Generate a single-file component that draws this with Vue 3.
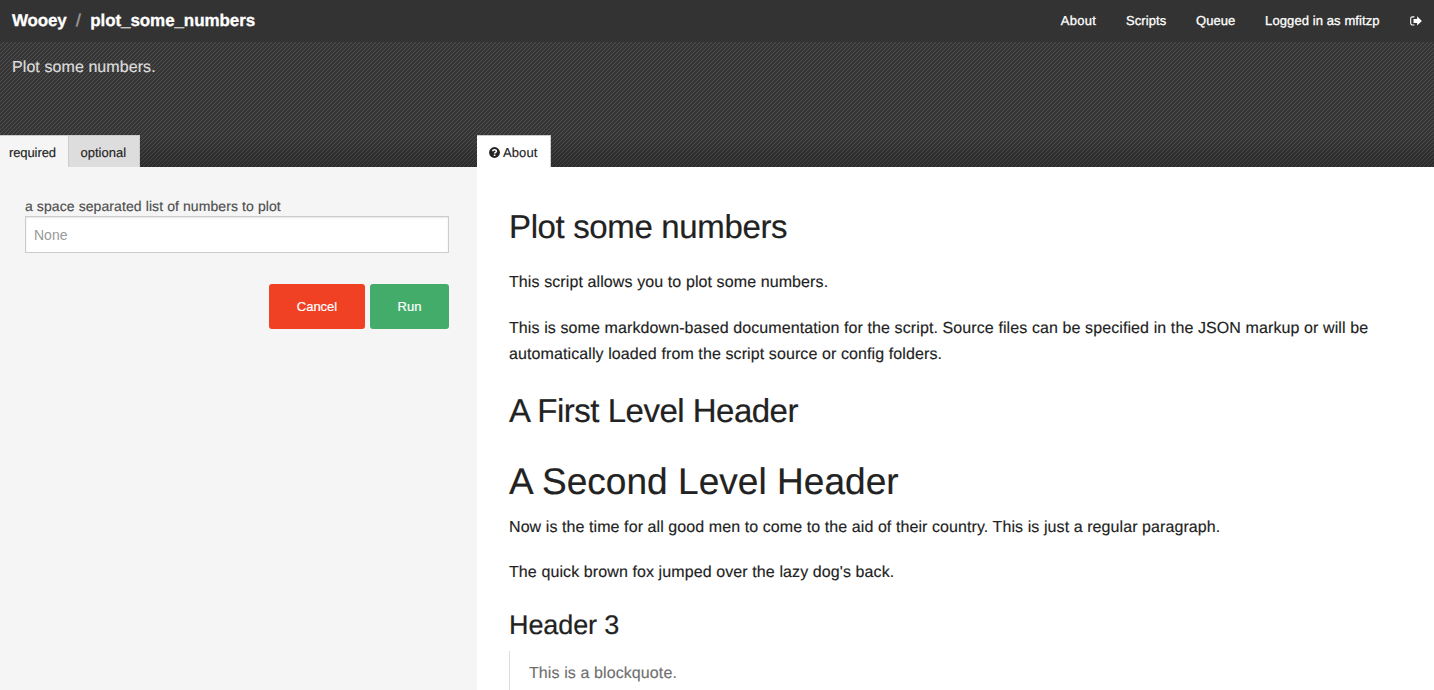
<script setup>
const links = ['About', 'Scripts', 'Queue', 'Logged in as mfitzp']
</script>

<template>
  <div class="page">
    <nav class="topbar">
      <div class="crumbs"><b class="brand">Wooey</b><span class="slash">/</span><b class="script">plot_some_numbers</b></div>
      <div class="links">
        <a v-for="l in links" :key="l">{{ l }}</a>
        <svg class="signout" width="12" height="10" viewBox="0 0 12 10"><path d="M4.4.9H2.4Q.7.9.7 2.6v4.7Q.7 9 2.4 9h2" fill="none" stroke="#fff" stroke-width="1.1" /><path d="M11.9 4.95 7.1.3v2.6H3.5v4.1h3.6v2.6z" fill="#fff" /></svg>
      </div>
    </nav>
    <header class="banner">
      <p class="desc">Plot some numbers.</p>
      <div class="tabs">
        <div class="left">
          <a class="tab required">required</a><a class="tab optional">optional</a>
        </div>
        <a class="tab about">
          <svg width="11" height="11" viewBox="0 0 11 11"><circle cx="5.5" cy="5.5" r="5.4" fill="#222" /><path d="M3.6 4.3C3.7 2.2 7.4 2.2 7.4 4.2 7.4 5.4 5.7 5.3 5.6 6.6" fill="none" stroke="#fff" stroke-width="1.5" /><path d="M4.8 7.5h1.6v1.5H4.8z" fill="#fff" /></svg>
          <span>About</span>
        </a>
      </div>
    </header>
    <main class="body">
      <section class="form">
        <label>a space separated list of numbers to plot</label>
        <input type="text" placeholder="None">
        <div class="actions">
          <button class="cancel">Cancel</button>
          <button class="run">Run</button>
        </div>
      </section>
      <article class="doc">
        <h2 class="t1">Plot some numbers</h2>
        <p class="p1">This script allows you to plot some numbers.</p>
        <p class="p2">This is some markdown-based documentation for the script. Source files can be specified in the JSON markup or will be<br>automatically loaded from the script source or config folders.</p>
        <h2 class="t2">A First Level Header</h2>
        <h1 class="t3">A Second Level Header</h1>
        <p class="p3">Now is the time for all good men to come to the aid of their country. This is just a regular paragraph.</p>
        <p class="p4">The quick brown fox jumped over the lazy dog's back.</p>
        <h3 class="t4">Header 3</h3>
        <blockquote>This is a blockquote.</blockquote>
      </article>
    </main>
  </div>
</template>

<style scoped>
* { box-sizing: border-box; }
.page { width: 1434px; height: 690px; overflow: hidden; font-family: "Liberation Sans", Arial, sans-serif; color: #222; background: #fff; display: flex; flex-direction: column; text-rendering: geometricPrecision; }
p, h1, h2, h3, blockquote { margin: 0; font-weight: 400; white-space: nowrap; }
.topbar { height: 42px; flex: none; background: #333; color: #fff; display: flex; justify-content: space-between; padding: 0 12px; line-height: 41px; }
.crumbs { font-size: 17px; display: flex; -webkit-text-stroke: .3px; }
.brand { letter-spacing: -.2px; width: 55px; }
.script { letter-spacing: -.09px; }
.slash { color: #999; width: 23.3px; padding-left: 9px; -webkit-text-stroke: .5px; }
.links { display: flex; align-items: flex-start; font-size: 13px; letter-spacing: .1px; -webkit-text-stroke: .3px #fff; }
.links a { margin-right: 29.6px; line-height: 41px; }
.links a:nth-child(1) { letter-spacing: .3px; }
.links a:nth-child(4) { margin-right: 30.3px; }
.signout { margin-top: 15.5px; }
.banner { height: 125px; flex: none; display: flex; flex-direction: column; justify-content: space-between; background: linear-gradient(#0000 75%, #0003), linear-gradient(135deg, #353535 42%, #505050 42% 58%, #353535 58%) 0 0 / 4px 4px; }
.desc { color: #ddd; font-size: 16px; line-height: 20px; padding: 16px 12px 0; letter-spacing: .08px; -webkit-text-stroke: .2px; }
.tabs { display: flex; height: 32px; }
.left { width: 477px; display: flex; }
.tab { height: 32px; font-size: 13px; padding-top: 2px; line-height: 31px; border-top: 1px solid #ccc; display: flex; align-items: center; -webkit-text-stroke: .15px; }
.required { width: 68px; padding-left: 9px; background: #f5f5f5; letter-spacing: -.1px; }
.optional { width: 72px; padding-left: 11.5px; background: #ddd; border-left: 1px solid #ccc; border-right: 1px solid #ccc; }
.about { width: 74px; padding-left: 12px; background: #fff; gap: 3px; border-right: 1px solid #ccc; letter-spacing: .1px; }
.body { display: flex; flex: 1; min-height: 0; }
.form { width: 477px; background: #f5f5f5; padding: 29px 28px 0 25px; flex: none; }
label { display: block; font-size: 14px; line-height: 20px; color: #4d4d4d; white-space: nowrap; letter-spacing: .09px; -webkit-text-stroke: .15px; }
input { display: block; width: 424px; height: 37px; border: 1px solid #ccc; box-shadow: inset 0 1px 2px rgba(0,0,0,.1); font: 14px "Liberation Sans", Arial, sans-serif; padding: 0 8px; border-radius: 0; background: #fff; }
input::placeholder { color: #999; }
.actions { margin-top: 31px; display: flex; gap: 5px; justify-content: flex-end; }
button { height: 45px; border: 0; border-radius: 3px; color: #fff; font: 13px "Liberation Sans", Arial, sans-serif; padding: 0; -webkit-text-stroke: .2px #fff; }
.cancel { width: 96px; background: #f04124; }
.run { width: 79px; background: #43ac6a; }
.doc { flex: 1; padding: 37px 32px 0; font-size: 16px; line-height: 26px; }
.doc p, blockquote { letter-spacing: .1px; -webkit-text-stroke: .15px; }
.t1, .t2 { font-size: 33px; line-height: 46px; letter-spacing: -.36px; -webkit-text-stroke: .2px; }
.p1 { margin-top: 20px; }
.p2 { margin-top: 20px; }
.t2 { margin-top: 20px; letter-spacing: -.5px; }
.t3 { font-size: 37px; line-height: 52px; margin-top: 22px; letter-spacing: .04px; -webkit-text-stroke: .2px; }
.p3 { margin-top: 7px; }
.doc .p3 { letter-spacing: .082px; }
.p4 { margin-top: 19px; }
.t4 { font-size: 27px; line-height: 38px; margin-top: 20px; letter-spacing: -.1px; -webkit-text-stroke: .2px; }
blockquote { margin-top: 7px; border-left: 1px solid #ddd; padding: 10px 0 9px 19px; height: 60px; color: #6f6f6f; }
</style>
<style>
body { overflow: hidden; }
</style>
